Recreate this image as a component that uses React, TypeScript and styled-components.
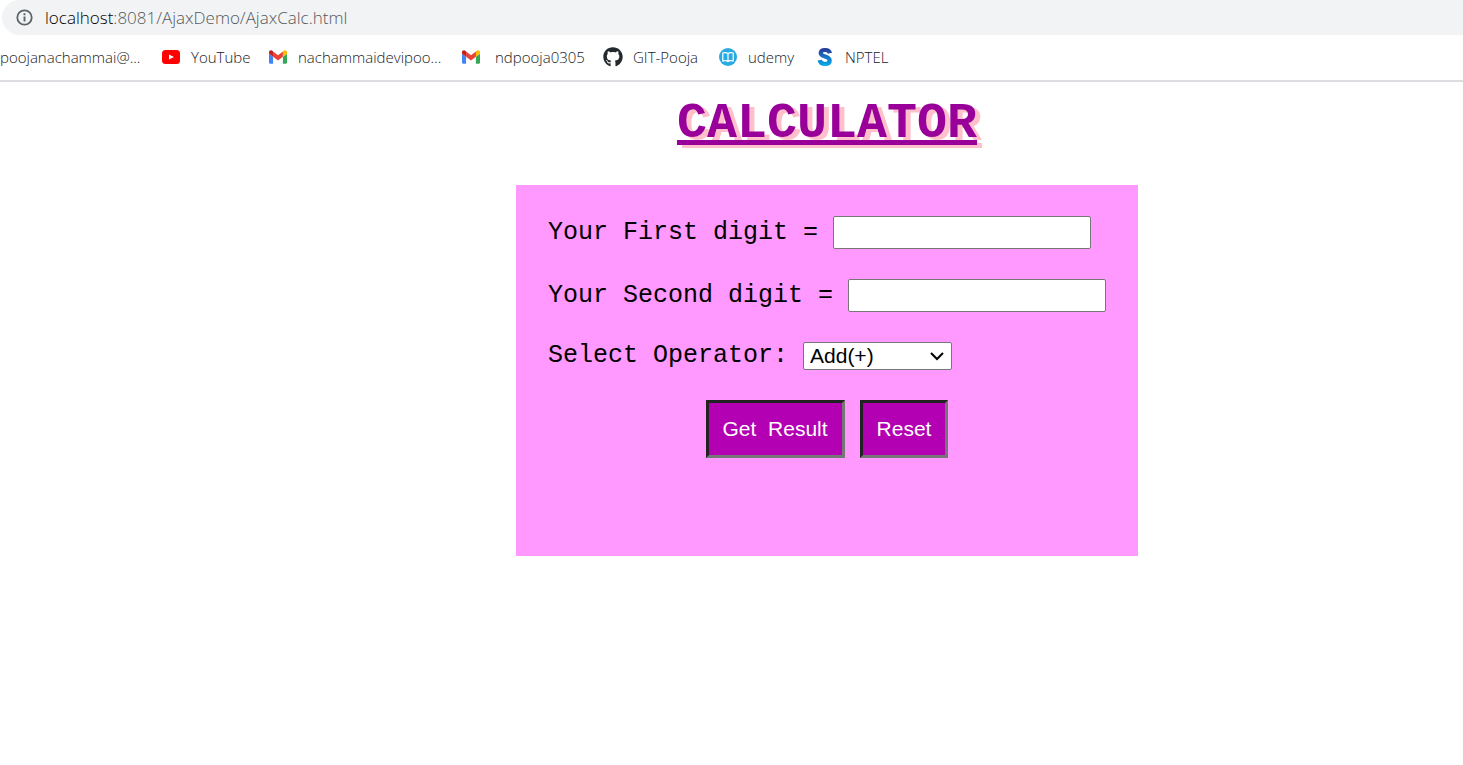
import React from "react";
import styled, { createGlobalStyle } from "styled-components";
import { FaGithub } from "react-icons/fa";

const GlobalStyle = createGlobalStyle`
  *, *::before, *::after { box-sizing: border-box; }
  body { margin: 0; background: #fff; color: #000; overflow-x: hidden; }
`;

const AddressBar = styled.div`
  display: flex;
  align-items: center;
  gap: 12px;
  height: 35px;
  margin-left: 2px;
  padding-left: 14px;
  border-radius: 18px 0 0 18px;
  background: #f1f3f4;
  color: #5f6368;
  font: 300 17px/24px "Open Sans", sans-serif;
`;

const Url = styled.span`
  color: #55595d;
`;

const Host = styled.span`
  color: #000;
`;

const BookmarkBar = styled.nav`
  display: flex;
  align-items: center;
  height: 47px;
  padding-bottom: 2px;
  border-bottom: 2px solid #dcdce1;
  font: 300 15px/20px "Open Sans", sans-serif;
`;

const Bookmark = styled.a<{ $width: number; $gap?: number }>`
  display: flex;
  flex: none;
  align-items: center;
  gap: ${(p) => p.$gap ?? 9}px;
  width: ${(p) => p.$width}px;
  color: #202124;
  text-decoration: none;
  white-space: nowrap;
`;

const IconSlot = styled.span`
  display: flex;
  justify-content: center;
  width: 22px;
  flex: none;
`;

const Page = styled.main`
  display: flex;
  flex-direction: column;
  align-items: center;
  padding: 12px 0 32px 191px;
`;

const Title = styled.h1`
  margin: 0;
  color: #990099;
  font: bold 50px/60px "Liberation Mono", monospace;
  text-decoration: underline;
  text-decoration-thickness: 5px;
  text-decoration-skip-ink: none;
  text-underline-offset: 3px;
  text-shadow: 5px 3px pink;
`;

const Panel = styled.form`
  display: flex;
  flex-direction: column;
  gap: 30px;
  margin-top: 31px;
  padding: 31px 32px 98px;
  background: #ff99ff;
`;

const Row = styled.div`
  display: flex;
  align-items: center;
  gap: 15px;
  font: 25px/28px "Liberation Mono", monospace;
`;

const NumberBox = styled.input`
  width: 258px;
  height: 33px;
  padding: 1px 4px;
  border: 1px solid #767676;
  border-radius: 2px;
  background: #fff;
  font: 21px/24px "Liberation Sans", sans-serif;
`;

const SelectWrap = styled.div`
  position: relative;
  display: flex;
`;

const OperatorSelect = styled.select`
  appearance: none;
  width: 149px;
  height: 28px;
  padding: 0 6px;
  border: 1px solid #767676;
  border-radius: 2px;
  background: #fff;
  color: #000;
  font: 21px/26px "Liberation Sans", sans-serif;
`;

const Chevron = styled.svg`
  position: absolute;
  top: 9px;
  right: 8px;
  pointer-events: none;
`;

const Actions = styled.div`
  display: flex;
  justify-content: center;
  gap: 15px;
`;

const ActionButton = styled.button`
  height: 58px;
  padding: 0 14px;
  border: 3px solid;
  border-color: #222 #767676 #767676 #222;
  background: #b300b3;
  color: #fff;
  font: 21px/24px "Liberation Sans", sans-serif;
  white-space: pre;
`;

const InfoIcon = () => (
  <svg width="17" height="17" viewBox="0 0 17 17" fill="none" aria-hidden="true">
    <circle cx="8.5" cy="8.5" r="7.2" stroke="#5f6368" strokeWidth="1.8" />
    <path d="M8.5 7.5v5M8.5 4.3v2" stroke="#5f6368" strokeWidth="1.9" />
  </svg>
);

const YouTubeIcon = () => (
  <svg width="18" height="14" viewBox="0 0 18 14" aria-hidden="true">
    <rect width="18" height="14" rx="3.5" fill="#f00" />
    <path d="M7 4.500l5 2.500-5 2.500z" fill="#fff" />
  </svg>
);

const GmailIcon = () => (
  <svg width="18" height="14" viewBox="52 42 88 66" aria-hidden="true">
    <path fill="#4285f4" d="M58 108h14V74L52 59v43c0 3.3 2.7 6 6 6" />
    <path fill="#34a853" d="M120 108h14c3.3 0 6-2.7 6-6V59l-20 15" />
    <path fill="#fbbc04" d="M120 48v26l20-15v-8c0-7.400-8.500-11.600-14.400-7.200" />
    <path fill="#ea4335" d="M72 74V48l24 18 24-18v26L96 92" />
    <path fill="#c5221f" d="M52 51v8l20 15V48l-5.600-4.200c-6-4.400-14.400-.2-14.400 7.200" />
  </svg>
);

const UdemyIcon = () => (
  <svg width="18" height="18" viewBox="0 0 18 18" aria-hidden="true">
    <circle cx="9" cy="9" r="9" fill="#29abe2" />
    <path
      d="M9 5.500C7.500 4.500 5.500 4.500 3.800 5v8c1.700-.4 3.700-.4 5.200.5 1.500-.9 3.500-.9 5.200-.5V5C12.500 4.500 10.500 4.500 9 5.500zM9 5.500v8"
      fill="none"
      stroke="#fff"
      strokeWidth="1.200"
    />
  </svg>
);

const NptelIcon = () => (
  <svg width="16" height="20" viewBox="0 0 16 20" fill="none" aria-hidden="true">
    <defs>
      <linearGradient id="nptel" x1="0" y1="0" x2="0" y2="20" gradientUnits="userSpaceOnUse">
        <stop offset="0" stopColor="#2b2f91" />
        <stop offset="0.5" stopColor="#1673c4" />
        <stop offset="1" stopColor="#00b4ee" />
      </linearGradient>
    </defs>
    <path
      d="M13 6.300C12.500 4 10.700 3 8.200 3 5.500 3 3.700 4.200 3.700 6.100 3.700 10.500 12.700 8.500 12.700 13.500 12.700 15.700 10.800 17 8 17 5.200 17 3.200 15.800 2.700 13.200"
      stroke="url(#nptel)"
      strokeWidth="4.200"
    />
  </svg>
);

export default function App() {
  return (
    <>
      <GlobalStyle />
      <header>
        <AddressBar>
          <InfoIcon />
          <Url>
            <Host>localhost</Host>:8081/AjaxDemo/AjaxCalc.html
          </Url>
        </AddressBar>
        <BookmarkBar aria-label="Bookmarks">
          <Bookmark href="#" $width={160}>poojanachammai@...</Bookmark>
          <Bookmark href="#" $width={107}>
            <IconSlot><YouTubeIcon /></IconSlot>YouTube
          </Bookmark>
          <Bookmark href="#" $width={193}>
            <IconSlot><GmailIcon /></IconSlot>nachammaidevipoo...
          </Bookmark>
          <Bookmark href="#" $width={142} $gap={13}>
            <IconSlot><GmailIcon /></IconSlot>ndpooja0305
          </Bookmark>
          <Bookmark href="#" $width={115}>
            <IconSlot><FaGithub size={20} color="#24292e" /></IconSlot>GIT-Pooja
          </Bookmark>
          <Bookmark href="#" $width={97}>
            <IconSlot><UdemyIcon /></IconSlot>udemy
          </Bookmark>
          <Bookmark href="#" $width={90}>
            <IconSlot><NptelIcon /></IconSlot>NPTEL
          </Bookmark>
        </BookmarkBar>
      </header>
      <Page>
        <Title>CALCULATOR</Title>
        <Panel onSubmit={(e) => e.preventDefault()}>
          <Row>
            <label htmlFor="first">Your First digit =</label>
            <NumberBox id="first" type="text" />
          </Row>
          <Row>
            <label htmlFor="second">Your Second digit =</label>
            <NumberBox id="second" type="text" />
          </Row>
          <Row>
            <label htmlFor="operator">Select Operator:</label>
            <SelectWrap>
              <OperatorSelect id="operator">
                <option>Add(+)</option>
              </OperatorSelect>
              <Chevron width="14" height="10" viewBox="0 0 14 10" fill="none" aria-hidden="true">
                <path d="M1 2l6 6 6-6" stroke="#000" strokeWidth="2" />
              </Chevron>
            </SelectWrap>
          </Row>
          <Actions>
            <ActionButton type="submit">{"Get  Result"}</ActionButton>
            <ActionButton type="reset">Reset</ActionButton>
          </Actions>
        </Panel>
      </Page>
    </>
  );
}
